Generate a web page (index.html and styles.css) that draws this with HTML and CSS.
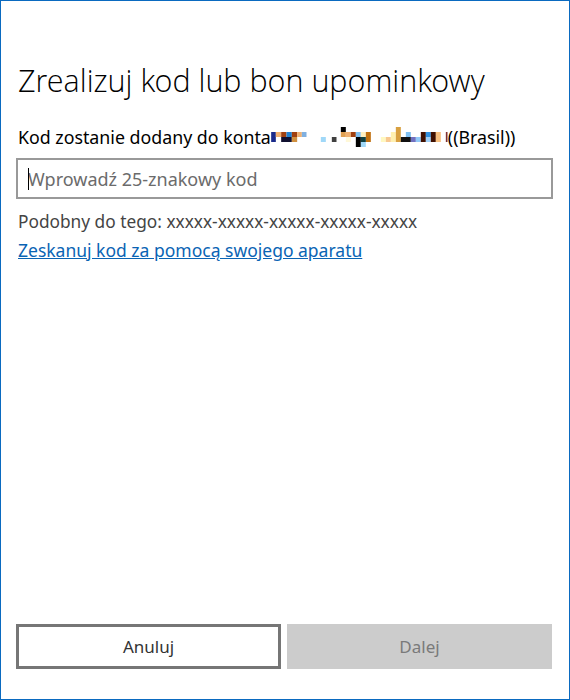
FILE: index.html
```html
<!DOCTYPE html>
<html lang="pl">
<head>
    <meta charset="UTF-8">
    <meta name="viewport" content="width=device-width, initial-scale=1.0">
    <title>Zrealizuj kod</title>
    <link rel="stylesheet" href="styles.css">
</head>
<body>
    <div class="dialog">
        <h1 class="title">Zrealizuj kod lub bon upominkowy</h1>

        <p class="account">Kod zostanie dodany do konta<svg class="redacted" width="177" height="20" viewBox="66 20 530 60" aria-hidden="true">
            <rect x="66" y="35" width="14" height="15" fill="#1a2a8a"/>
            <rect x="66" y="50" width="14" height="15" fill="#1a2a8a"/>
            <rect x="80" y="35" width="16" height="15" fill="#f0b070"/>
            <rect x="96" y="35" width="16" height="15" fill="#a04010"/>
            <rect x="112" y="35" width="16" height="15" fill="#2080d0"/>
            <rect x="128" y="35" width="16" height="15" fill="#a04010"/>
            <rect x="144" y="35" width="14" height="15" fill="#f0b070"/>
            <rect x="158" y="35" width="14" height="15" fill="#80b0e0"/>
            <rect x="96" y="50" width="32" height="15" fill="#101030"/>
            <rect x="128" y="50" width="16" height="15" fill="#d09040"/>
            <rect x="215" y="50" width="15" height="15" fill="#a0d8f8"/>
            <rect x="248" y="50" width="14" height="15" fill="#404040"/>
            <rect x="275" y="20" width="15" height="15" fill="#000000"/>
            <rect x="275" y="35" width="15" height="15" fill="#e0a050"/>
            <rect x="290" y="35" width="15" height="15" fill="#f0b070"/>
            <rect x="305" y="35" width="15" height="15" fill="#a04010"/>
            <rect x="320" y="35" width="15" height="15" fill="#80c0f0"/>
            <rect x="335" y="35" width="15" height="15" fill="#fff0c0"/>
            <rect x="350" y="35" width="15" height="30" fill="#c07010"/>
            <rect x="290" y="50" width="15" height="15" fill="#fff8d8"/>
            <rect x="320" y="50" width="15" height="30" fill="#000000"/>
            <rect x="335" y="50" width="15" height="15" fill="#104040"/>
            <rect x="335" y="65" width="15" height="15" fill="#a0d8f8"/>
            <rect x="395" y="50" width="15" height="15" fill="#fff8c0"/>
            <rect x="410" y="50" width="15" height="15" fill="#f8c890"/>
            <rect x="425" y="35" width="15" height="30" fill="#fff0b0"/>
            <rect x="440" y="20" width="15" height="45" fill="#d8a040"/>
            <rect x="455" y="50" width="30" height="15" fill="#101010"/>
            <rect x="470" y="35" width="15" height="15" fill="#80c0f0"/>
            <rect x="485" y="50" width="15" height="15" fill="#7070c0"/>
            <rect x="500" y="50" width="15" height="15" fill="#90c8f8"/>
            <rect x="515" y="35" width="15" height="30" fill="#401000"/>
            <rect x="530" y="35" width="15" height="15" fill="#3090e0"/>
            <rect x="530" y="50" width="15" height="15" fill="#a0d0f8"/>
            <rect x="545" y="35" width="15" height="30" fill="#401000"/>
            <rect x="560" y="35" width="15" height="30" fill="#f8c080"/>
            <rect x="590" y="35" width="5" height="30" fill="#803030"/>
        </svg>((Brasil))</p>

        <div class="field">
            <input class="code-input" type="text" placeholder="Wprowadź 25-znakowy kod">
            <span class="caret"></span>
        </div>

        <p class="hint">Podobny do tego: xxxxx-xxxxx-xxxxx-xxxxx-xxxxx</p>
        <a class="scan-link" href="#">Zeskanuj kod za pomocą swojego aparatu</a>

        <div class="actions">
            <button class="btn btn-cancel">Anuluj</button>
            <button class="btn btn-next" disabled>Dalej</button>
        </div>
    </div>
</body>
</html>
```

FILE: styles.css
```css
body {
    margin: 0;
    background: white;
    font-family: "Noto Sans", "Open Sans", sans-serif;
    color: #000;
}
.dialog {
    box-sizing: border-box;
    width: 570px;
    height: 700px;
    border: 1px solid #0a6ac0;
    padding: 0 17px 30px 15px;
    display: flex;
    flex-direction: column;
}
.title {
    font-family: "Open Sans Light", "Open Sans", sans-serif;
    font-weight: 300;
    font-size: 30.5px;
    line-height: 40px;
    margin: 59px 0 0 2px;
    color: #000;
}
.account {
    font-size: 17.8px;
    line-height: 20px;
    margin: 27px 0 0 2px;
    display: flex;
    align-items: center;
}
.redacted {
    display: block;
}
.field {
    margin-top: 11px;
    position: relative;
}
.code-input {
    box-sizing: border-box;
    width: 537px;
    height: 41px;
    border: 2px solid #999;
    padding: 0 10px;
    font-family: "Noto Sans", "Open Sans", sans-serif;
    font-size: 18px;
    color: #000;
    outline: none;
}
.code-input::placeholder {
    color: #6b6b6b;
}
.caret {
    position: absolute;
    left: 12px;
    top: 10px;
    width: 1px;
    height: 22px;
    background: #000;
}
.hint {
    font-size: 17.3px;
    line-height: 20px;
    margin: 13px 0 0 2px;
    color: #444;
}
.scan-link {
    font-size: 17.5px;
    line-height: 20px;
    margin: 8px 0 0 2px;
    color: #0a64b4;
    text-decoration: underline;
    align-self: flex-start;
}
.actions {
    margin-top: auto;
    display: flex;
    gap: 6px;
}
.btn {
    box-sizing: border-box;
    width: 265px;
    height: 45px;
    font-family: "Noto Sans", "Open Sans", sans-serif;
    font-size: 17px;
}
.btn-cancel {
    background: white;
    border: 3px solid #767676;
    color: #333;
}
.btn-next {
    background: #ccc;
    border: none;
    color: #7a7a7a;
}
```
